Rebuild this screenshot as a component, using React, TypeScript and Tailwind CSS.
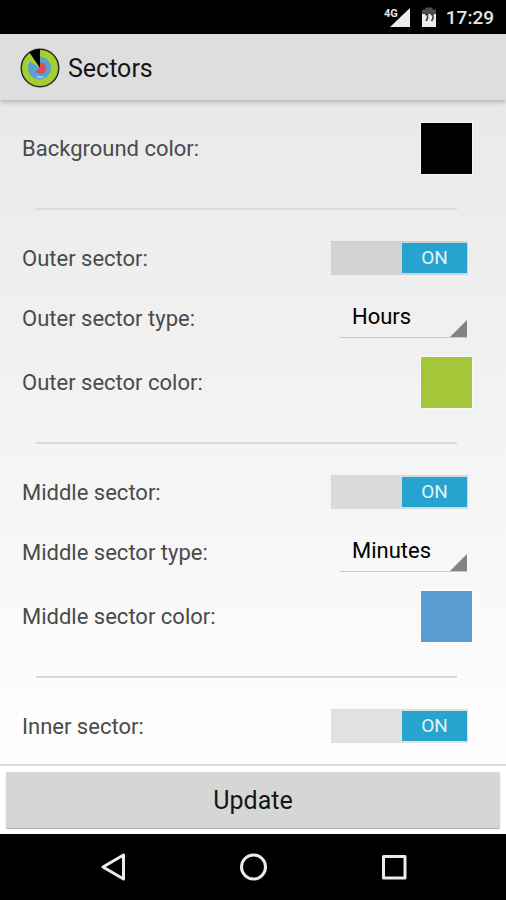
import { useState } from "react";

type Sector = { name: string; type?: string; color?: string };

const sectors: Sector[] = [
  { name: "Outer", type: "Hours", color: "#a4c639" },
  { name: "Middle", type: "Minutes", color: "#599dd2" },
  { name: "Inner" },
];

function StatusBar() {
  return (
    <div className="flex h-[34px] shrink-0 items-center justify-end bg-black pt-0.5 pr-3 text-[#e6e6e6]">
      <svg width="28" height="22" viewBox="0 0 28 22" aria-hidden="true">
        <path d="M26 1v19H6z" fill="#ececec" />
        <text x="0" y="10" fontSize="11" fontWeight="700" fontFamily="Roboto, sans-serif" fill="#e6e6e6" stroke="#000" strokeWidth="2" paintOrder="stroke">
          4G
        </text>
      </svg>
      <svg className="ml-2" width="18" height="22" viewBox="0 0 18 22" aria-hidden="true">
        <path d="M5.500 .5h7v2H16V7H2V2.500h3.500z" fill="#4c4c4c" />
        <path d="M2 7h14v13H2z" fill="#ececec" />
        <path d="M5 7.500h2.500v4L6 14M10.500 7.500h2.500v4L11.500 14" fill="none" stroke="#333" strokeWidth="1.500" />
      </svg>
      <span className="ml-2 text-[19px] leading-6 font-medium">17:29</span>
    </div>
  );
}

function AppIcon() {
  return (
    <svg width="40" height="40" viewBox="0 0 40 40" aria-hidden="true">
      <circle cx="20" cy="20" r="19.500" fill="#2a2a2a" />
      <circle cx="20" cy="20" r="18" fill="#a5cf2e" />
      <path d="M20 20V8.500A11.500 11.500 0 1 1 10 13.500z" fill="#55a2d6" />
      <path d="M20 20V14.500A5.800 5.800 0 1 1 15.500 23.500z" fill="#e34b52" />
      <path d="M20 20L9.500 4.500A19 19 0 0 1 20 1z" fill="#000" />
      <path d="M16.500 29h7" stroke="#a9d4ec" strokeWidth="1.500" />
    </svg>
  );
}

function Swatch({ id, initial }: { id: string; initial: string }) {
  const [value, setValue] = useState(initial);
  return (
    <input
      id={id}
      type="color"
      value={value}
      onChange={(e) => setValue(e.target.value)}
      className="mr-3 size-[51px] cursor-pointer appearance-none border-0 bg-transparent p-0 outline outline-white/60 [&::-webkit-color-swatch]:rounded-none [&::-webkit-color-swatch]:border-0 [&::-webkit-color-swatch-wrapper]:p-0"
    />
  );
}

function Toggle({ id }: { id: string }) {
  const [on, setOn] = useState(true);
  return (
    <label
      htmlFor={id}
      className={`relative mr-4 flex h-[34px] w-[137px] cursor-pointer border border-black/1 bg-black/11 py-px ${on ? "justify-end" : "justify-start"}`}
    >
      <input id={id} type="checkbox" role="switch" checked={on} onChange={() => setOn(!on)} className="sr-only" />
      <span
        className={`flex w-[65px] items-center justify-center text-[19px] text-[#e4f4fa] ${on ? "bg-[#27a3d0]" : "bg-[#999999]"}`}
      >
        {on ? "ON" : "OFF"}
      </span>
    </label>
  );
}

function Spinner({ id, initial }: { id: string; initial: string }) {
  const [value, setValue] = useState(initial);
  return (
    <div className="relative mr-[17px] w-[127px] border-b border-[#c8c8c8]">
      <select
        id={id}
        value={value}
        onChange={(e) => setValue(e.target.value)}
        className="block h-[38px] w-full cursor-pointer appearance-none bg-transparent pb-0.5 pl-3 text-[22px] text-black"
      >
        <option>Hours</option>
        <option>Minutes</option>
        <option>Seconds</option>
      </select>
      <svg className="pointer-events-none absolute right-0 bottom-0" width="17" height="17" viewBox="0 0 17 17" aria-hidden="true">
        <path d="M17 0v17H0z" fill="#828282" />
      </svg>
    </div>
  );
}

function Divider() {
  return <hr className="mr-[27px] mb-5 ml-3.5 border-t-2 border-[#d9d9d9]" />;
}

export default function App() {
  return (
    <div className="flex h-screen flex-col overflow-hidden bg-white font-[Roboto,sans-serif]">
      <StatusBar />
      <header className="z-10 flex h-[66px] shrink-0 items-center gap-2 bg-[#dedede] px-5 pt-0.5 shadow-[0_2px_5px_rgba(0,0,0,0.25)]">
        <AppIcon />
        <h1 className="pt-0.5 text-[25px] leading-8 text-[#161616]">Sectors</h1>
      </header>
      <main className="min-h-0 flex-1 overflow-hidden bg-linear-to-b from-[#e9e9e9] to-[#fefefe] px-[22px] pt-4 text-[22px] leading-8 text-[#4a4a4a]">
        <div className="mb-7 flex h-16 items-center justify-between">
          <label className="pt-0.5" htmlFor="background">Background color:</label>
          <Swatch id="background" initial="#000000" />
        </div>
        {sectors.map((s) => (
          <section key={s.name}>
            <Divider />
            <div className="flex h-14 items-center justify-between">
              <label className="pt-0.5" htmlFor={`${s.name}-on`}>{s.name} sector:</label>
              <Toggle id={`${s.name}-on`} />
            </div>
            {s.type && (
              <div className="flex h-16 items-center justify-between">
                <label className="pt-0.5" htmlFor={`${s.name}-type`}>{s.name} sector type:</label>
                <Spinner id={`${s.name}-type`} initial={s.type} />
              </div>
            )}
            {s.color && (
              <div className="mb-7 flex h-16 items-center justify-between">
                <label className="pt-0.5" htmlFor={`${s.name}-color`}>{s.name} sector color:</label>
                <Swatch id={`${s.name}-color`} initial={s.color} />
              </div>
            )}
          </section>
        ))}
      </main>
      <div className="shrink-0 border-t-2 border-[#dcdcdc] bg-white px-1.5 pt-1.5 pb-1.5">
        <button
          type="button"
          className="block h-14 w-full cursor-pointer rounded-xs bg-[#d6d6d6] pt-0.5 text-[25px] text-[#161616] shadow-[0_1px_1px_rgba(0,0,0,0.35)]"
        >
          Update
        </button>
      </div>
      <nav className="flex h-[66px] shrink-0 items-center justify-center gap-[100px] bg-black">
        <button type="button" aria-label="Back" className="flex size-10 items-center justify-center">
          <svg width="40" height="40" viewBox="0 0 40 40" fill="none" stroke="#ececec" strokeWidth="3" strokeLinejoin="round">
            <path d="M30.500 8v24L10 20z" />
          </svg>
        </button>
        <button type="button" aria-label="Home" className="flex size-10 items-center justify-center">
          <svg width="40" height="40" viewBox="0 0 40 40" fill="none" stroke="#ececec" strokeWidth="3">
            <circle cx="20.500" cy="20" r="12" />
          </svg>
        </button>
        <button type="button" aria-label="Recent apps" className="flex size-10 items-center justify-center">
          <svg width="40" height="40" viewBox="0 0 40 40" fill="none" stroke="#ececec" strokeWidth="3" strokeLinejoin="round">
            <path d="M10.500 9.500h21.500v21.500H10.500z" />
          </svg>
        </button>
      </nav>
    </div>
  );
}
